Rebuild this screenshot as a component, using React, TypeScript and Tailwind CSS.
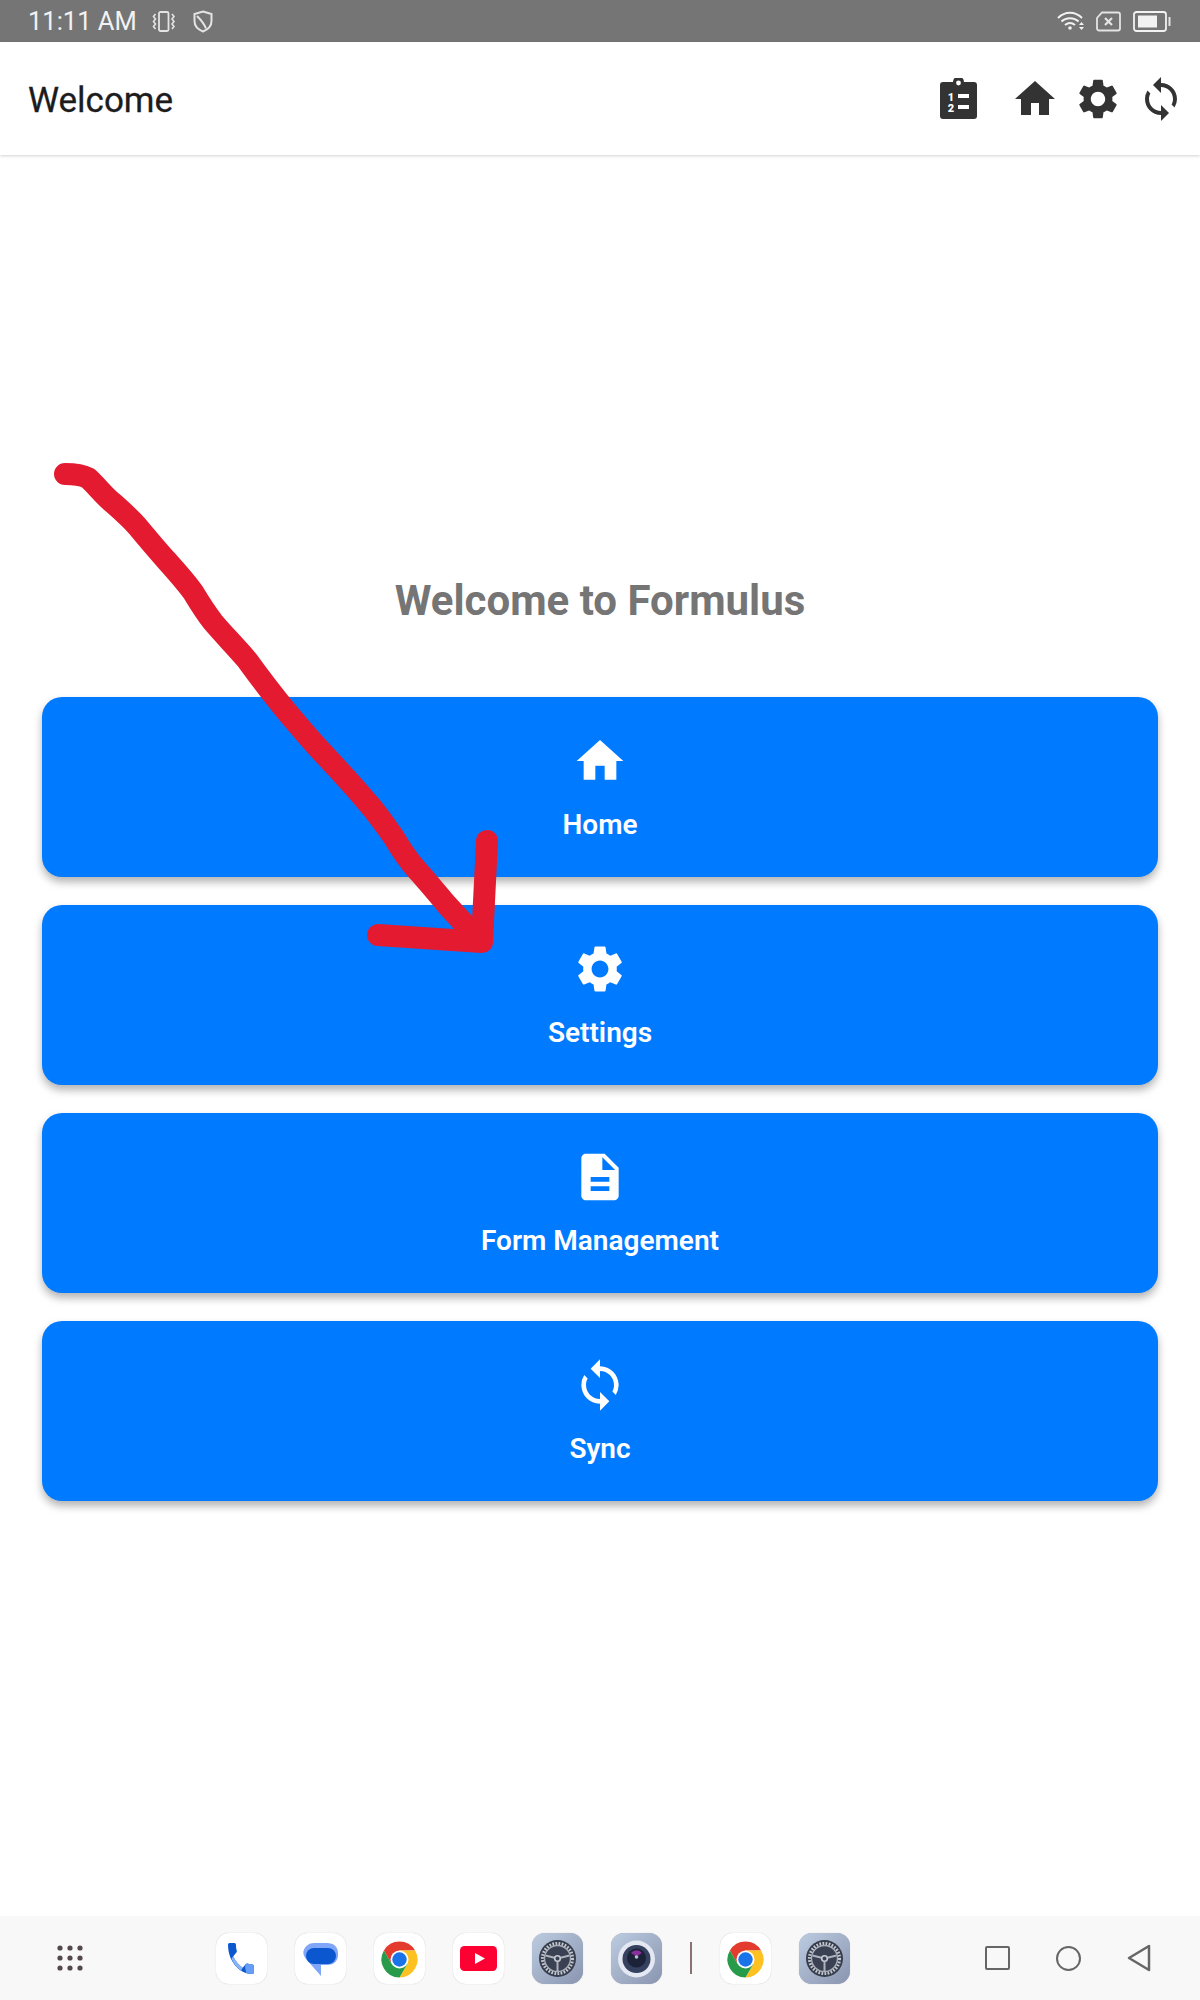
import React from "react";
import { MdHome, MdSettings, MdDescription, MdSync } from "react-icons/md";

const Tile = ({ children, className = "bg-white" }: { children: React.ReactNode; className?: string }) => (
  <div className={`h-[51px] w-[51px] shrink-0 overflow-hidden rounded-[13px] shadow-[0_0_1px_rgba(0,0,0,0.25)] ${className}`}>
    <svg viewBox="0 0 51 51" width="51" height="51">{children}</svg>
  </div>
);

const Chrome = () => (
  <Tile>
    <g transform="translate(1.5 2.5)">
      <path d="M39.6 15A18 18 0 0 0 8.4 15L16.2 28.5L24 15Z" fill="#e33b2e" />
      <path d="M39.6 15A18 18 0 0 1 24 42L31.8 28.5L24 15Z" fill="#fdc221" />
      <path d="M24 42A18 18 0 0 1 8.4 15L16.2 28.5L31.8 28.5Z" fill="#279b4a" />
      <circle cx="24" cy="24" r="9" fill="#fff" />
      <circle cx="24" cy="24" r="7.2" fill="#1a73e8" />
    </g>
  </Tile>
);

const SettingsTile = ({ id }: { id: string }) => (
  <Tile className="bg-[#a9b6cc]">
    <defs>
      <linearGradient id={id} x1="0" y1="0" x2="1" y2="1">
        <stop offset="0" stopColor="#bccce0" />
        <stop offset="1" stopColor="#8a95b0" />
      </linearGradient>
    </defs>
    <rect width="51" height="51" fill={`url(#${id})`} />
    <circle cx="25.5" cy="25.5" r="18.5" fill="#363d4c" />
    <circle cx="25.5" cy="25.5" r="15" fill="none" stroke="#c4c8d0" strokeWidth="3.2" strokeDasharray="1.7 1.4" />
    <circle cx="25.5" cy="25.5" r="13" fill="#3a4152" stroke="#a8adb8" strokeWidth="1.4" />
    <path d="M25.5 25.5L13.5 22.5M25.5 25.5L37.5 22.5M25.5 25.5L25.5 38" stroke="#aeb2bc" strokeWidth="2" />
    <circle cx="25.5" cy="25.5" r="2.8" fill="#3a4152" stroke="#c4c8d0" strokeWidth="1.6" />
  </Tile>
);

const Clipboard = () => (
  <svg width="37" height="41" viewBox="0 0 37 41" className="shrink-0">
    <path d="M3 4H13A5.5 5.5 0 0 1 24 4H34A3 3 0 0 1 37 7V38A3 3 0 0 1 34 41H3A3 3 0 0 1 0 38V7A3 3 0 0 1 3 4Z" fill="#333" />
    <circle cx="18.5" cy="5" r="2.4" fill="#fff" />
    <text x="11" y="23" textAnchor="middle" fontFamily="Roboto" fontWeight="900" fontSize="11" fill="#fff">1</text>
    <text x="11" y="34" textAnchor="middle" fontFamily="Roboto" fontWeight="900" fontSize="11" fill="#fff">2</text>
    <rect x="18" y="16" width="11" height="4" fill="#fff" />
    <rect x="18" y="27" width="11" height="4" fill="#fff" />
  </svg>
);

const MenuButton = ({ icon, label }: { icon: React.ReactNode; label: string }) => (
  <button className="flex h-[180px] w-full flex-col items-center justify-center gap-[19px] rounded-[20px] bg-[#007bff] text-white shadow-[0_5px_8px_rgba(0,0,0,0.3)]">
    {icon}
    <span className="text-[28px] leading-[33px] font-semibold">{label}</span>
  </button>
);

export default function App() {
  return (
    <div className="relative flex h-[2000px] w-[1200px] flex-col overflow-hidden bg-white font-['Roboto',sans-serif]">
      {/* Status bar */}
      <div className="flex h-[42px] shrink-0 items-center bg-[#757575] pr-[29px] pl-[28px] text-[#f2f2f2]">
        <span className="mt-[2px] text-[25.5px] leading-none">11:11 AM</span>
        <svg width="25" height="21" viewBox="0 0 25 21" className="ml-[14px]" fill="none" stroke="#e4e4e4" strokeWidth="1.800">
          <rect x="8" y="1" width="9.500" height="19" rx="1.500" />
          <path d="M4.500 3L2.500 5.500L4.500 8L2.500 10.500L4.500 13L2.500 15.500L4.500 18" strokeWidth="1.600" />
          <path d="M21 3L23 5.500L21 8L23 10.500L21 13L23 15.500L21 18" strokeWidth="1.600" />
        </svg>
        <svg width="20" height="23" viewBox="0 0 20 23" className="ml-[17px]" fill="none" stroke="#e4e4e4" strokeWidth="2">
          <path d="M10 1.500L18.500 4V11C18.500 16 15 19.500 10 21.500C5 19.500 1.500 16 1.500 11V4Z" />
          <path d="M4 6C7 9 11 13 13 18.500" />
        </svg>
        <div className="flex-1" />
        <svg width="27" height="20" viewBox="0 0 27 20" fill="none" stroke="#f2f2f2" strokeWidth="2">
          <path d="M1 7C8 0 18 0 25 7" />
          <path d="M4.500 10.500C9 6 17 6 21.500 10.500" />
          <path d="M8 14C11 11.500 15 11.500 18 14" />
          <circle cx="13" cy="17" r="1.800" fill="#f2f2f2" stroke="none" />
          <path d="M22 14L24.500 11L27 14ZM22 16L24.500 19L27 16Z" fill="#f2f2f2" stroke="none" />
        </svg>
        <svg width="25" height="21" viewBox="0 0 25 21" className="ml-[12px]" fill="none" stroke="#e4e4e4" strokeWidth="1.800">
          <path d="M6 1.500H22A2 2 0 0 1 24 3.500V17.500A2 2 0 0 1 22 19.500H3A2 2 0 0 1 1 17.500V7Z" />
          <path d="M9 7L16 14M16 7L9 14" strokeWidth="2.200" />
        </svg>
        <svg width="38" height="21" viewBox="0 0 38 21" className="ml-[12px]" fill="none">
          <rect x="1" y="1" width="32" height="19" rx="2.500" stroke="#f2f2f2" strokeWidth="1.800" />
          <rect x="5" y="4.500" width="19" height="12" fill="#f2f2f2" />
          <rect x="35.500" y="6" width="2" height="9" fill="#e4e4e4" />
        </svg>
      </div>

      {/* Header */}
      <header className="z-10 flex h-[113px] shrink-0 items-center bg-white pr-[15px] pl-[28px] shadow-[0_1px_3px_rgba(0,0,0,0.18)]">
        <h1 className="mt-[3px] flex-1 text-[35px] leading-none font-normal text-[#1c1c1e] [-webkit-text-stroke:0.3px_#1c1c1e]">Welcome</h1>
        <div className="mr-[34px]"><Clipboard /></div>
        <div className="flex items-center gap-[15px] text-[#333]">
          <MdHome size={48} />
          <MdSettings size={48} />
          <MdSync size={48} />
        </div>
      </header>

      {/* Main */}
      <main className="flex flex-1 flex-col items-center px-[42px] pt-[420px]">
        <h2 className="mb-[70px] text-[42px] leading-[52px] font-bold text-[#757575]">Welcome to Formulus</h2>
        <div className="flex w-full flex-col gap-[28px]">
          <MenuButton icon={<MdHome size={56} />} label="Home" />
          <MenuButton icon={<MdSettings size={56} />} label="Settings" />
          <MenuButton icon={<MdDescription size={56} />} label="Form Management" />
          <MenuButton icon={<MdSync size={56} />} label="Sync" />
        </div>
      </main>

      {/* Bottom navigation */}
      <nav className="flex h-[84px] shrink-0 items-center bg-[#f8f8f8] pl-[57px]">
        <svg width="26" height="26" viewBox="0 0 26 26" fill="#54494a" className="shrink-0">
          {[3, 13, 23].map((y) => [3, 13, 23].map((x) => <circle key={`${x}-${y}`} cx={x} cy={y} r="2.600" />))}
        </svg>
        <div className="ml-[133px] flex items-center gap-[28px]">
          <Tile>
            <g transform="translate(7.700 4.800) scale(1.440 1.720)">
              <path d="M6.620 10.790c1.440 2.830 3.760 5.140 6.590 6.590l2.200-2.200c.270-.270.670-.360 1.020-.240 1.120.370 2.330.570 3.570.570.550 0 1 .450 1 1V20c0 .550-.450 1-1 1-9.390 0-17-7.610-17-17 0-.550.450-1 1-1h3.500c.550 0 1 .450 1 1 0 1.250.200 2.450.570 3.570.110.350.030.740-.250 1.020l-2.200 2.200z" fill="#0b57d0" />
              <path d="M15.410 15.180c.270-.270.670-.360 1.020-.240 1.120.370 2.330.570 3.570.570.550 0 1 .450 1 1V20c0 .550-.450 1-1 1-1.500 0-3-.200-4.400-.560l-.8-3.400z" fill="#669df6" />
              <path d="M6.620 10.790c1.440 2.830 3.760 5.140 6.590 6.590l-1.100 1.600c-2.900-1.500-5.300-3.900-6.700-6.900z" fill="#8ab4f8" />
            </g>
          </Tile>
          <Tile>
            <path d="M19 10H32C39 10 43 14 43 20V22C43 28 39 32 32 32H26V43L11 26C8.500 23 8 20 8.500 18C10 13 14 10 19 10Z" fill="#7fa6f8" />
            <rect x="11" y="15" width="30" height="16" rx="8" fill="#0b57d0" />
          </Tile>
          <Chrome />
          <Tile>
            <rect x="7" y="13" width="37" height="25" rx="4.500" fill="#ff0033" />
            <path d="M22 20L32 25.500L22 31Z" fill="#fff" />
          </Tile>
          <SettingsTile id="set-a" />
          <Tile className="bg-[#a9b6cc]">
            <defs>
              <linearGradient id="cam-bg" x1="0" y1="0" x2="1" y2="1">
                <stop offset="0" stopColor="#bccce0" />
                <stop offset="1" stopColor="#8a95b0" />
              </linearGradient>
            </defs>
            <rect width="51" height="51" fill="url(#cam-bg)" />
            <circle cx="25.500" cy="26" r="18.500" fill="#e3e8f2" />
            <circle cx="25.500" cy="26" r="14" fill="#36405f" />
            <circle cx="25.500" cy="25" r="9.500" fill="#1c2238" />
            <path d="M20 20A7 7 0 0 1 31 20L25.500 23.500Z" fill="#8c2f9e" />
            <circle cx="25.500" cy="24" r="1.800" fill="#b9bed0" />
          </Tile>
        </div>
        <div className="mx-[28px] h-[32px] w-[2px] bg-[#8a7272]" />
        <div className="flex items-center gap-[28px]">
          <Chrome />
          <SettingsTile id="set-b" />
        </div>
        <div className="ml-[135px] flex items-center gap-[46px]">
          <div className="h-[24px] w-[25px] rounded-[2px] border-[2.500px] border-[#666]" />
          <div className="h-[25px] w-[25px] rounded-full border-[2.500px] border-[#666]" />
          <svg width="24" height="28" viewBox="0 0 24 28" fill="none" stroke="#666" strokeWidth="2.500" strokeLinejoin="round">
            <path d="M22 2V26L2 14Z" />
          </svg>
        </div>
      </nav>

      {/* Hand-drawn arrow annotation over the page */}
      <svg width="1200" height="2000" viewBox="0 0 1200 2000" className="pointer-events-none absolute inset-0 z-20" fill="none" stroke="#e41a30" strokeWidth="22" strokeLinecap="round" strokeLinejoin="round">
        <path d="M65 474C75 474 82 475 88 478C96 485 104 496 113 503C122 511 130 518 137 526C147 538 157 550 167 561C176 571 185 581 193 592C199 602 206 613 213 622C224 635 236 647 247 660C260 678 273 695 287 712C298 725 309 738 320 750C336 767 352 784 367 802C377 813 385 825 393 836C400 848 408 860 417 870C427 881 437 893 447 905C458 917 469 929 480 941" />
        <path d="M487 841L482 942L378 935" />
      </svg>
    </div>
  );
}
